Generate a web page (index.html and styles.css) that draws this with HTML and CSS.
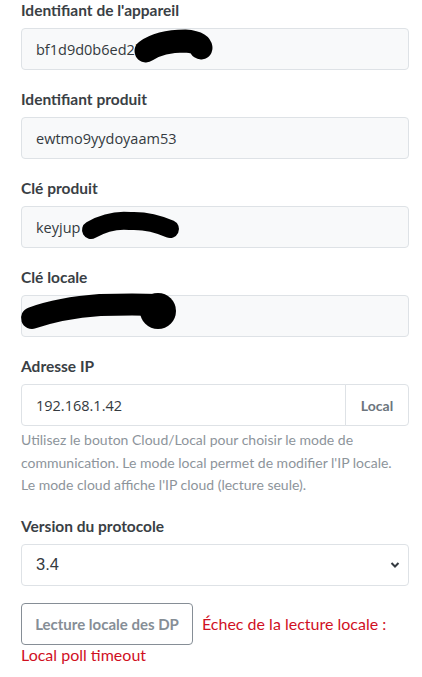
FILE: index.html
```html
<!DOCTYPE html>
<html lang="fr">
<head>
<meta charset="utf-8">
<link rel="stylesheet" href="styles.css">
</head>
<body>
<div class="form">
  <div class="field">
    <label class="label">Identifiant de l'appareil</label>
    <div class="input readonly">bf1d9d0b6ed2b</div>
  </div>
  <div class="field">
    <label class="label">Identifiant produit</label>
    <div class="input readonly">ewtmo9yydoyaam53</div>
  </div>
  <div class="field">
    <label class="label">Clé produit</label>
    <div class="input readonly">keyjup</div>
  </div>
  <div class="field">
    <label class="label">Clé locale</label>
    <div class="input readonly"></div>
  </div>
  <div class="field">
    <label class="label">Adresse IP</label>
    <div class="group">
      <div class="input grow">192.168.1.42</div>
      <div class="addon">Local</div>
    </div>
    <p class="help">Utilisez le bouton Cloud/Local pour choisir le mode de communication. Le mode local permet de modifier l'IP locale. Le mode cloud affiche l'IP cloud (lecture seule).</p>
  </div>
  <div class="field field-last">
    <label class="label">Version du protocole</label>
    <div class="input select"><span class="sel-val">3.4</span>
      <svg class="chev" width="10" height="8" viewBox="0 0 10 8"><path d="M1.5 2 L5 5.5 L8.5 2" fill="none" stroke="#343a40" stroke-width="2"/></svg>
    </div>
  </div>
  <div class="actions"><button class="btn">Lecture locale des DP</button><span class="error">Échec de la lecture locale : Local poll timeout</span></div>
</div>
<svg class="redact" width="422" height="677" viewBox="0 0 422 677">
  <path d="M146 51 Q160 41 185 41 Q200 42 201 48" fill="none" stroke="#000" stroke-width="23" stroke-linecap="round"/>
  <path d="M91 230 Q110 219 130 221 Q150 220 170 229" fill="none" stroke="#000" stroke-width="18" stroke-linecap="round"/>
  <path d="M32 318 Q60 308 100 305 Q135 304 158 305" fill="none" stroke="#000" stroke-width="22" stroke-linecap="round"/>
  <circle cx="158" cy="311" r="18" fill="#000"/>
</svg>
</body>
</html>
```
FILE: styles.css
```css
body {
  margin: 0;
  background: #fff;
  font-family: "Lato", "Open Sans", sans-serif;
  color: #343a40;
}
.form {
  width: 388px;
  padding-left: 21px;
}
.field {
  margin-bottom: 19px;
}
.field-last {
  margin-bottom: 17px;
}
.label {
  display: block;
  font-size: 15.5px;
  font-weight: bold;
  line-height: 20px;
  margin-bottom: 8px;
  color: #3a3f45;
}
.input {
  box-sizing: border-box;
  height: 42px;
  border: 1px solid #dee2e6;
  border-radius: 4px;
  padding: 0 14px;
  display: flex;
  align-items: center;
  font-family: "Open Sans", sans-serif;
  font-size: 14.5px;
  color: #343a40;
  background: #fff;
}
.readonly {
  background: #f8f9fa;
}
.group {
  display: flex;
}
.grow {
  flex: 1;
  border-radius: 4px 0 0 4px;
}
.addon {
  box-sizing: border-box;
  height: 42px;
  width: 64px;
  border: 1px solid #dee2e6;
  margin-left: -1px;
  border-radius: 0 4px 4px 0;
  display: flex;
  align-items: center;
  justify-content: center;
  font-size: 14px;
  font-weight: bold;
  color: #6c757d;
}
.help {
  margin: 3px 0 0;
  max-width: 380px;
  font-size: 14px;
  line-height: 22.5px;
  color: #8d949b;
}
.select {
  justify-content: space-between;
  font-family: "Liberation Sans", sans-serif;
  font-size: 16.5px;
  padding-right: 8px;
}
.actions {
  font-size: 16px;
  line-height: 20px;
  color: #d0101f;
}
.btn {
  box-sizing: border-box;
  height: 42px;
  width: 172px;
  border: 1px solid #868e96;
  border-radius: 4px;
  background: #fff;
  color: #868e96;
  font-family: "Lato", sans-serif;
  font-weight: bold;
  font-size: 15px;
  vertical-align: baseline;
  margin-right: 9px;
  padding: 0;
}
.redact {
  position: absolute;
  left: 0;
  top: 0;
  pointer-events: none;
}
```
